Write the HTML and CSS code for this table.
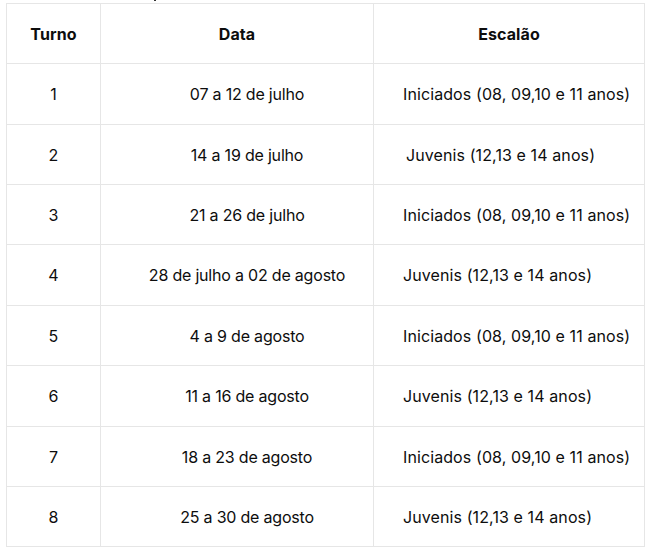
FILE: index.html
```html
<!DOCTYPE html>
<html lang="pt">
<head>
<meta charset="utf-8">
<title>Turnos</title>
<link rel="stylesheet" href="styles.css">
</head>
<body>
<div class="mark"></div>
<table class="schedule">
  <thead>
    <tr class="h60">
      <th class="c-turno">Turno</th>
      <th class="c-data">Data</th>
      <th class="c-esc">Escalão</th>
    </tr>
  </thead>
  <tbody>
    <tr class="h61"><td class="c-turno">1</td><td class="c-data">07 a 12 de julho</td><td class="c-esc">Iniciados (08, 09,10 e 11 anos)</td></tr>
    <tr class="h60"><td class="c-turno">2</td><td class="c-data">14 a 19 de julho</td><td class="c-esc"><span class="indent">Juvenis (12,13 e 14 anos)</span></td></tr>
    <tr class="h60"><td class="c-turno">3</td><td class="c-data">21 a 26 de julho</td><td class="c-esc">Iniciados (08, 09,10 e 11 anos)</td></tr>
    <tr class="h61"><td class="c-turno">4</td><td class="c-data">28 de julho a 02 de agosto</td><td class="c-esc">Juvenis (12,13 e 14 anos)</td></tr>
    <tr class="h60"><td class="c-turno">5</td><td class="c-data">4 a 9 de agosto</td><td class="c-esc">Iniciados (08, 09,10 e 11 anos)</td></tr>
    <tr class="h61"><td class="c-turno">6</td><td class="c-data">11 a 16 de agosto</td><td class="c-esc">Juvenis (12,13 e 14 anos)</td></tr>
    <tr class="h60"><td class="c-turno">7</td><td class="c-data">18 a 23 de agosto</td><td class="c-esc">Iniciados (08, 09,10 e 11 anos)</td></tr>
    <tr class="h60"><td class="c-turno">8</td><td class="c-data">25 a 30 de agosto</td><td class="c-esc">Juvenis (12,13 e 14 anos)</td></tr>
  </tbody>
</table>
</body>
</html>
```
FILE: styles.css
```css
html, body {
  margin: 0;
  padding: 0;
  background: #ffffff;
}

body {
  font-family: Inter, "Noto Sans", "Liberation Sans", sans-serif;
  font-size: 16px;
  letter-spacing: 0.1px;
  color: #0d0d0d;
  padding: 3px 0 0 6px;
  position: relative;
}

.mark {
  position: absolute;
  left: 154px;
  top: 0;
  width: 2px;
  height: 1px;
  background: #333;
}

.schedule {
  border-collapse: collapse;
  width: 638px;
  table-layout: fixed;
}

.schedule th,
.schedule td {
  border: 1px solid #e6e6e6;
  padding: 0;
  vertical-align: middle;
}

.schedule th {
  font-weight: 700;
  text-align: center;
}

.c-turno { width: 93px; text-align: center; }
.schedule th.c-data { width: 272px; text-align: center; }
.schedule td.c-data { text-align: center; padding-left: 20px; letter-spacing: -0.2px; }
.c-esc { width: 270px; }
.schedule td.c-esc { text-align: left; padding-left: 29px; }

.indent { padding-left: 3px; }

.h60 { height: 60px; }
.h61 { height: 61px; }
```
